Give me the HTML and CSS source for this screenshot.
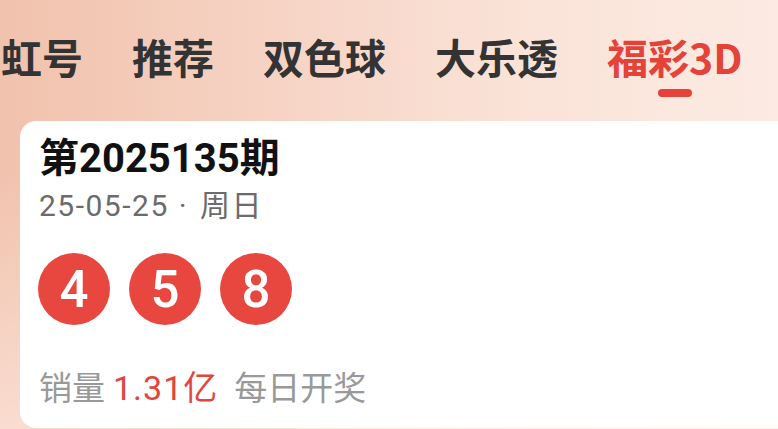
FILE: index.html
```html
<!DOCTYPE html>
<html lang="zh">
<head>
<meta charset="utf-8">
<title>福彩3D</title>
<link rel="stylesheet" href="styles.css">
</head>
<body>
<div class="page">
  <nav class="tabs">
    <div class="tab"><span class="tab-label">虹号</span></div>
    <div class="tab"><span class="tab-label">推荐</span></div>
    <div class="tab"><span class="tab-label">双色球</span></div>
    <div class="tab"><span class="tab-label">大乐透</span></div>
    <div class="tab tab-active"><span class="tab-label">福彩3D</span><span class="tab-bar"></span></div>
  </nav>
  <section class="card">
    <h1 class="issue">第2025135期</h1>
    <div class="date">25-05-25<span class="dot">·</span>周日</div>
    <div class="balls">
      <span class="ball">4</span>
      <span class="ball">5</span>
      <span class="ball">8</span>
    </div>
    <div class="sales">
      <span>销量</span>
      <span class="amount">1.31亿</span>
      <span class="freq">每日开奖</span>
    </div>
  </section>
</div>
</body>
</html>
```

FILE: styles.css
```css
* { box-sizing: border-box; }
html, body {
  margin: 0;
  padding: 0;
  width: 778px;
  height: 429px;
  overflow: hidden;
}
body {
  font-family: Roboto, "Noto Sans CJK SC", sans-serif;
  background:
    linear-gradient(180deg, rgba(255, 242, 236, 0) 40%, rgba(255, 242, 236, 0.55) 100%),
    linear-gradient(90deg, #f1c2ad 0%, #f6d3c4 35%, #fae2d7 65%, #fcebe3 100%);
}
.page {
  display: flex;
  flex-direction: column;
  height: 429px;
}
.tabs {
  display: flex;
  gap: 49px;
  padding: 32px 0 0 1px;
  height: 121px;
}
.tab {
  display: flex;
  flex-direction: column;
  align-items: center;
}
.tab-label {
  font-family: "Noto Sans CJK SC", sans-serif;
  font-size: 41px;
  line-height: 48px;
  font-weight: 700;
  color: #333333;
  white-space: nowrap;
}
.tab-active .tab-label {
  color: #e5423a;
}
.tab-bar {
  margin-top: 9px;
  width: 34px;
  height: 8px;
  border-radius: 4px;
  background: #e5423a;
}
.card {
  margin-left: 20px;
  margin-right: -20px;
  background: #ffffff;
  border-radius: 16px;
  padding: 14px 20px 20px 19px;
  height: 307px;
}
.issue {
  margin: 0;
  font-size: 40px;
  line-height: 48px;
  font-weight: 700;
  color: #111111;
}
.date {
  margin-top: 6px;
  font-size: 30px;
  line-height: 34px;
  color: #6b6b6b;
  letter-spacing: 1.5px;
}
.dot {
  margin: 0 12px 0 10px;
}
.balls {
  display: flex;
  gap: 19px;
  margin-top: 30px;
  margin-left: -1px;
}
.ball {
  width: 72px;
  height: 72px;
  border-radius: 50%;
  background: #e8473f;
  color: #ffffff;
  font-size: 51px;
  font-weight: 500;
  display: flex;
  align-items: center;
  justify-content: center;
  line-height: 1;
}
.sales {
  margin-top: 43px;
  display: flex;
  align-items: baseline;
  font-size: 33px;
  line-height: 40px;
  color: #999999;
}
.amount {
  margin-left: 8px;
  font-size: 34px;
  letter-spacing: 1px;
  color: #e0463e;
}
.freq {
  margin-left: 16px;
}
```
